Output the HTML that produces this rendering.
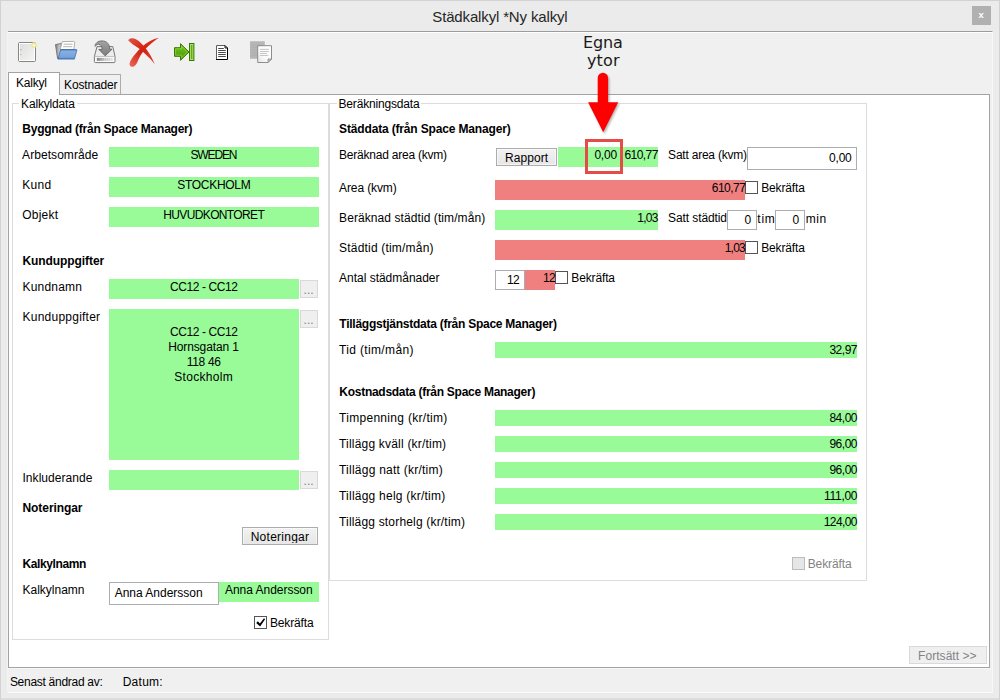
<!DOCTYPE html>
<html lang="sv">
<head>
<meta charset="utf-8">
<title>Städkalkyl *Ny kalkyl</title>
<style>
html,body{margin:0;padding:0;}
body{width:1000px;height:700px;position:relative;overflow:hidden;background:#ebebeb;font-family:"Liberation Sans",sans-serif;font-size:12px;color:#000;}
.a{position:absolute;box-sizing:border-box;}
.t{position:absolute;white-space:pre;}
.g{position:absolute;background:#98fb98;}
.r{position:absolute;background:#f08080;}
.inp{position:absolute;box-sizing:border-box;background:#fff;border:1px solid #abadb3;}
.cb{position:absolute;box-sizing:border-box;width:13px;height:13px;background:#fff;border:1px solid #555;}
.btn{position:absolute;box-sizing:border-box;border:1px solid #acacac;background:linear-gradient(#f2f2f2,#e6e6e6);}
.dbtn{position:absolute;box-sizing:border-box;border:1px solid #d9d9d9;background:#efefef;}
.gb{position:absolute;box-sizing:border-box;border:1px solid #dcdcdc;}
</style>
</head>
<body>
<!-- window frame -->
<div class="a" style="left:0;top:0;width:1000px;height:700px;border:1px solid #d2d2d2;border-bottom:2px solid #dcdcdc;"></div>
<!-- close button -->
<div class="a" style="left:972px;top:6px;width:19px;height:19px;background:#b0b0b0;"></div>

<!-- inner panel -->
<div class="a" style="left:8px;top:31px;width:985px;height:662px;background:#f0f0f0;border-top:1px solid #9c9c9c;border-right:1px solid #f7f7f7;border-bottom:1px solid #fafafa;"></div>
<div class="a" style="left:7px;top:31px;width:1px;height:662px;background:#f3f3f3;"></div>
<div class="a" style="left:8px;top:32px;width:984px;height:1px;background:#fff;"></div>

<!--ICONS_START-->
<!-- toolbar icons -->
<svg class="a" style="left:17px;top:41px" width="22" height="23" viewBox="0 0 22 23">
  <defs>
    <linearGradient id="nd" x1="0" y1="0" x2="1" y2="1"><stop offset="0" stop-color="#dcdcdc"/><stop offset="1" stop-color="#f6f6f6"/></linearGradient>
    <radialGradient id="glow"><stop offset="0" stop-color="#f6f4ff"/><stop offset="0.38" stop-color="#f5f3dc"/><stop offset="0.66" stop-color="#ebe36e" stop-opacity="0.95"/><stop offset="0.88" stop-color="#efe99a" stop-opacity="0.5"/><stop offset="1" stop-color="#efe99a" stop-opacity="0"/></radialGradient>
  </defs>
  <rect x="1.5" y="1.5" width="17" height="19" rx="1.2" fill="url(#nd)" stroke="#85857e"/>
  <rect x="2.5" y="2.5" width="15" height="17" fill="none" stroke="#fff"/>
  <circle cx="3.8" cy="8.7" r="0.7" fill="#a8a8a8"/><circle cx="3.8" cy="13.6" r="0.7" fill="#a8a8a8"/>
  <circle cx="17" cy="4.1" r="3.3" fill="url(#glow)"/>
</svg>
<svg class="a" style="left:54px;top:40px" width="25" height="22" viewBox="0 0 25 22">
  <defs>
    <linearGradient id="fb" x1="0" y1="0" x2="0" y2="1"><stop offset="0" stop-color="#4a7dc2"/><stop offset="0.2" stop-color="#86aee0"/><stop offset="0.8" stop-color="#78a3da"/><stop offset="1" stop-color="#4477be"/></linearGradient>
    <linearGradient id="fg" x1="0" y1="0" x2="1" y2="0"><stop offset="0" stop-color="#7c7c7c"/><stop offset="0.5" stop-color="#c8c8c8"/><stop offset="1" stop-color="#8e8e8e"/></linearGradient>
  </defs>
  <path d="M1.5 4.6 L7.5 3.4 L9 17.5 L3.6 18.6 Z" fill="url(#fg)" stroke="#707070" stroke-width="0.9"/>
  <path d="M8.2 1.6 L19.6 1.4 Q20.8 1.5 20.7 2.8 L19.8 9.5 L6.2 9.5 Z" fill="#fff" stroke="#a6a6a0" stroke-width="0.9"/>
  <path d="M9.6 4.2 H18.6 M9 6.7 H18.2" stroke="#b4b4b0" stroke-width="1"/>
  <path d="M6.7 9.5 L22.2 9.5 Q23 9.5 22.8 10.4 L20.4 19.1 L4 19.1 Z" fill="url(#fb)" stroke="#3d6fb4" stroke-width="0.8"/>
</svg>
<svg class="a" style="left:93px;top:40px" width="25" height="24" viewBox="0 0 25 24">
  <defs>
    <linearGradient id="dv" x1="0" y1="0" x2="0" y2="1"><stop offset="0" stop-color="#e4e4e4"/><stop offset="1" stop-color="#fafafa"/></linearGradient>
    <linearGradient id="sl" x1="0" y1="0" x2="1" y2="0"><stop offset="0" stop-color="#7e7e7e"/><stop offset="0.35" stop-color="#b2b2b2"/><stop offset="1" stop-color="#e2e2e2"/></linearGradient>
    <linearGradient id="ar" x1="0" y1="0" x2="0" y2="1"><stop offset="0" stop-color="#a4a4a4"/><stop offset="1" stop-color="#7c7c7c"/></linearGradient>
  </defs>
  <path d="M4 6.6 H19.8 L22 16.4 V21.6 Q22 22.6 21 22.6 H2.4 Q1.4 22.6 1.4 21.6 V16.4 Z" fill="url(#dv)" stroke="#787878" stroke-width="1"/>
  <path d="M1.6 16.4 H21.8" stroke="#b0b0b0" stroke-width="0.8"/>
  <rect x="2.6" y="17.3" width="18.2" height="4.1" fill="#ededed" stroke="#fff" stroke-width="0.6"/>
  <rect x="4" y="17.9" width="15.2" height="2.9" fill="url(#sl)"/>
  <path d="M2.1 6.4 C2 3.4 4.6 0.9 9 0.9 C13.8 0.9 16.6 4 16.7 9.2 L19 9.2 L12.25 15.9 L5.9 9.5 L9.1 9.5 C9.1 6.6 8 4.4 5.6 4.3 C4.2 4.3 3 5.2 2.1 6.4 Z" fill="url(#ar)" stroke="#606060" stroke-width="0.8" stroke-linejoin="round"/>
  <path d="M11.5 18 V20.8 M13.5 18 V20.8 M15.5 18 V20.8 M17.5 18 V20.8" stroke="#f4f4f4" stroke-width="0.5" opacity="0.8"/>
</svg>
<svg class="a" style="left:126px;top:35px" width="36" height="34" viewBox="0 0 36 34">
  <defs>
    <linearGradient id="rx" x1="0" y1="0" x2="1" y2="1"><stop offset="0" stop-color="#e25544"/><stop offset="0.5" stop-color="#d3210f"/><stop offset="1" stop-color="#e04a38"/></linearGradient>
    <linearGradient id="rx2" x1="1" y1="0" x2="0" y2="1"><stop offset="0" stop-color="#d8301e"/><stop offset="0.55" stop-color="#d3210f"/><stop offset="1" stop-color="#ea6a58"/></linearGradient>
  </defs>
  <path d="M2.2 5.2 C5 1.6 10.6 3.8 14.4 7.4 C20.4 13 25.6 21.2 28.8 29.2 C23.4 22.6 17.2 16.6 12 12.8 C8.4 10.2 4.6 8 2.2 5.2 Z" fill="url(#rx)"/>
  <path d="M33 2.8 C25 4.6 18.4 9 13.6 14.2 C8.8 19.2 4.8 24.2 3.7 28 C2.9 30.8 5.2 32.6 7.8 31.4 C10.6 30 11.4 27 12.8 23.8 C15 18.8 18.6 14.6 22.4 11 C26.2 7.4 30 4.8 33 2.8 Z" fill="url(#rx2)"/>
</svg>
<svg class="a" style="left:173px;top:42px" width="23" height="20" viewBox="0 0 23 20">
  <defs>
    <linearGradient id="ga" x1="0" y1="0" x2="0" y2="1"><stop offset="0" stop-color="#7fcb26"/><stop offset="0.5" stop-color="#5cad10"/><stop offset="1" stop-color="#4c990a"/></linearGradient>
  </defs>
  <path d="M1.5 5.7 H7.5 V1.7 L16 10 L7.5 18.3 V14.3 H1.5 Z" fill="url(#ga)" stroke="#3c7606" stroke-width="1" stroke-linejoin="round"/>
  <path d="M2.6 6.8 H8.6 V4.2 L14.4 10 L8.6 15.8 V13.2 H2.6 Z" fill="none" stroke="#9bdc4c" stroke-width="0.8" opacity="0.75"/>
  <rect x="16.5" y="1.5" width="4.4" height="17" fill="#a4e25a" stroke="#3c7606" stroke-width="1"/>
  <rect x="18.1" y="3.1" width="1.2" height="13.8" fill="#58a80e"/>
</svg>
<svg class="a" style="left:215px;top:44px" width="15" height="18" viewBox="0 0 15 18">
  <path d="M1.5 1.5 H10 L12.5 4 V15.5 H1.5 Z" fill="#fff"/>
  <path d="M1.5 15.5 V1.5 H10" fill="none" stroke="#5e5e5e" stroke-width="1"/>
  <path d="M10 1.5 L12.5 4 V15.5 H1" fill="none" stroke="#000" stroke-width="1"/>
  <path d="M10 1.5 V4 H12.5" fill="none" stroke="#000" stroke-width="0.9"/>
  <path d="M3.2 4.5 H8.8 M3.2 6.5 H10.8 M3.2 8.5 H10.8 M3.2 10.5 H10.8 M3.2 12.5 H10.8" stroke="#4a4a4a" stroke-width="1"/>
</svg>
<svg class="a" style="left:249px;top:40px" width="25" height="25" viewBox="0 0 25 25">
  <defs><linearGradient id="cp" x1="1" y1="0" x2="0" y2="1"><stop offset="0" stop-color="#fff"/><stop offset="0.6" stop-color="#fafafa"/><stop offset="1" stop-color="#e2e2e2"/></linearGradient></defs>
  <rect x="1" y="1.2" width="14.8" height="17.6" rx="0.6" fill="#b6b6b6"/>
  <path d="M3 5 H13 M3 7.5 H13 M3 10 H13 M3 12.5 H13 M3 15 H13" stroke="#adadad" stroke-width="0.8"/>
  <path d="M8.7 5.7 H22.5 V19 L19 22.5 H8.7 Z" fill="url(#cp)" stroke="#8c8c8c" stroke-width="1" stroke-linejoin="round"/>
  <path d="M22.5 19 H19 V22.5 Z" fill="#c4c4c4" stroke="#8c8c8c" stroke-width="0.8" stroke-linejoin="round"/>
  <path d="M11 9.4 H20 M11 11.5 H20 M11 13.5 H18 M11 15.5 H19.4" stroke="#c6c6c6" stroke-width="1"/>
</svg>
<!--ICONS_END-->

<!-- tab page -->
<div class="a" style="left:8px;top:94px;width:982px;height:574px;background:#fff;border:1px solid #a3a3a3;"></div>
<div class="a" style="left:8px;top:668px;width:983px;height:1px;background:#f7f7f7;"></div>
<!-- tabs -->
<div class="a" style="left:57px;top:74px;width:64px;height:21px;background:#f0f0f0;border:1px solid #acacac;border-bottom:1px solid #a3a3a3;"></div>
<div class="a" style="left:8px;top:72px;width:52px;height:23px;background:#fff;border:1px solid #a3a3a3;border-bottom:none;"></div>

<!-- group boxes -->
<div class="gb" style="left:12px;top:103px;width:317px;height:537px;"></div>
<div class="gb" style="left:329px;top:103px;width:538px;height:478px;"></div>

<!-- LEFT: green fields -->
<div class="g" style="left:109px;top:147px;width:210px;height:20px;"></div>
<div class="g" style="left:109px;top:177px;width:210px;height:20px;"></div>
<div class="g" style="left:109px;top:207px;width:210px;height:20px;"></div>
<div class="g" style="left:109px;top:279px;width:190px;height:20px;"></div>
<div class="g" style="left:109px;top:309px;width:190px;height:151px;"></div>
<div class="g" style="left:109px;top:470px;width:190px;height:20px;"></div>
<div class="dbtn" style="left:300px;top:280px;width:18px;height:18px;"></div>
<div class="dbtn" style="left:300px;top:310px;width:18px;height:18px;"></div>
<div class="dbtn" style="left:300px;top:471px;width:18px;height:18px;"></div>
<div class="btn" style="left:242px;top:527px;width:76px;height:18px;box-shadow:inset 0 0 0 1px rgba(255,255,255,0.55);"></div>
<div class="inp" style="left:109px;top:582px;width:110px;height:23px;"></div>
<div class="g" style="left:219px;top:582px;width:100px;height:20px;"></div>
<div class="cb" style="left:254px;top:616px;"></div>
<svg class="a" style="left:254px;top:616px" width="13" height="13" viewBox="0 0 13 13"><path d="M2.2 6.9 L3.9 5.2 L5.9 7.5 L10.0 2.3 L11.1 3.2 L6.1 10.5 Z" fill="#000"/></svg>

<!-- RIGHT -->
<div class="btn" style="left:496px;top:148px;width:61px;height:18px;box-shadow:inset 0 0 0 1px rgba(255,255,255,0.55);"></div>
<div class="g" style="left:558px;top:147px;width:100px;height:20px;"></div>
<div class="inp" style="left:747px;top:147px;width:110px;height:23px;"></div>
<div class="r" style="left:495px;top:180px;width:250px;height:20px;"></div>
<div class="cb" style="left:745px;top:181px;"></div>
<div class="g" style="left:495px;top:210px;width:163px;height:20px;"></div>
<div class="inp" style="left:727px;top:210px;width:30px;height:20px;"></div>
<div class="inp" style="left:775px;top:210px;width:30px;height:20px;"></div>
<div class="r" style="left:495px;top:240px;width:250px;height:20px;"></div>
<div class="cb" style="left:745px;top:241px;"></div>
<div class="inp" style="left:495px;top:270px;width:30px;height:20px;"></div>
<div class="r" style="left:525px;top:270px;width:30px;height:20px;"></div>
<div class="cb" style="left:555px;top:271px;"></div>
<div class="g" style="left:495px;top:342px;width:362px;height:16px;"></div>
<div class="g" style="left:495px;top:410px;width:362px;height:16px;"></div>
<div class="g" style="left:495px;top:436px;width:362px;height:16px;"></div>
<div class="g" style="left:495px;top:462px;width:362px;height:16px;"></div>
<div class="g" style="left:495px;top:488px;width:362px;height:16px;"></div>
<div class="g" style="left:495px;top:514px;width:362px;height:16px;"></div>
<div class="a" style="left:792px;top:557px;width:13px;height:13px;background:#e6e6e6;border:1px solid #bcbcbc;"></div>
<div class="dbtn" style="left:909px;top:646px;width:78px;height:18px;"></div>

<!-- dots on disabled buttons -->
<span class="t" style="left:303.6px;top:283px;color:#838383;line-height:14px;letter-spacing:0.05px">...</span>
<span class="t" style="left:303.6px;top:313px;color:#838383;line-height:14px;letter-spacing:0.05px">...</span>
<span class="t" style="left:303.6px;top:474px;color:#838383;line-height:14px;letter-spacing:0.05px">...</span>

<span class="t" style="left:432.3px;top:8px;font-size:15px;line-height:17px;letter-spacing:-0.15px;color:#262626">Städkalkyl *Ny kalkyl</span>
<span class="t" style="left:978.5px;top:9px;font-size:9.5px;line-height:11px;font-weight:bold;color:#fff">x</span>
<span class="t" style="left:16.1px;top:76px;font-size:12px;line-height:14px;letter-spacing:-0.24px;">Kalkyl</span>
<span class="t" style="left:64.1px;top:78px;font-size:12px;line-height:14px;letter-spacing:-0.16px;">Kostnader</span>
<span class="t" style="left:21.1px;top:97px;font-size:12px;line-height:14px;letter-spacing:-0.18px;background:#fff;padding:0 2px;margin-left:-2px">Kalkyldata</span>
<span class="t" style="left:22.3px;top:122px;font-size:12px;line-height:14px;letter-spacing:-0.24px;font-weight:bold;">Byggnad (från Space Manager)</span>
<span class="t" style="left:22.1px;top:148px;font-size:12px;line-height:14px;letter-spacing:0.06px;">Arbetsområde</span>
<span class="t" style="left:22.3px;top:178px;font-size:12px;line-height:14px;letter-spacing:0.29px;">Kund</span>
<span class="t" style="left:22.3px;top:208px;font-size:12px;line-height:14px;letter-spacing:0.20px;">Objekt</span>
<span class="t" style="left:190.5px;top:148px;font-size:12px;line-height:14px;letter-spacing:-1.13px;">SWEDEN</span>
<span class="t" style="left:177.3px;top:178px;font-size:12px;line-height:14px;letter-spacing:-0.30px;">STOCKHOLM</span>
<span class="t" style="left:163.3px;top:208px;font-size:12px;line-height:14px;letter-spacing:-0.64px;">HUVUDKONTORET</span>
<span class="t" style="left:22.5px;top:254px;font-size:12px;line-height:14px;letter-spacing:-0.08px;font-weight:bold;">Kunduppgifter</span>
<span class="t" style="left:22.5px;top:280px;font-size:12px;line-height:14px;letter-spacing:0.19px;">Kundnamn</span>
<span class="t" style="left:170.1px;top:280px;font-size:12px;line-height:14px;letter-spacing:-0.42px;">CC12 - CC12</span>
<span class="t" style="left:22.5px;top:310px;font-size:12px;line-height:14px;letter-spacing:0.24px;">Kunduppgifter</span>
<span class="t" style="left:170.1px;top:325px;font-size:12px;line-height:14px;letter-spacing:-0.42px;">CC12 - CC12</span>
<span class="t" style="left:168.2px;top:340px;font-size:12px;line-height:14px;letter-spacing:-0.12px;">Hornsgatan 1</span>
<span class="t" style="left:186.8px;top:355px;font-size:12px;line-height:14px;letter-spacing:-0.34px;">118 46</span>
<span class="t" style="left:174.3px;top:370px;font-size:12px;line-height:14px;letter-spacing:0.31px;">Stockholm</span>
<span class="t" style="left:22.5px;top:471px;font-size:12px;line-height:14px;letter-spacing:0.04px;">Inkluderande</span>
<span class="t" style="left:22.5px;top:501px;font-size:12px;line-height:14px;letter-spacing:-0.07px;font-weight:bold;">Noteringar</span>
<span class="t" style="left:250.7px;top:530px;font-size:12px;line-height:14px;letter-spacing:0.26px;">Noteringar</span>
<span class="t" style="left:22.5px;top:557px;font-size:12px;line-height:14px;letter-spacing:-0.40px;font-weight:bold;">Kalkylnamn</span>
<span class="t" style="left:22.5px;top:583px;font-size:12px;line-height:14px;">Kalkylnamn</span>
<span class="t" style="left:114.7px;top:586px;font-size:12px;line-height:14px;letter-spacing:-0.01px;">Anna Andersson</span>
<span class="t" style="left:225.0px;top:583px;font-size:12px;line-height:14px;letter-spacing:-0.03px;">Anna Andersson</span>
<span class="t" style="left:269.9px;top:616px;font-size:12px;line-height:14px;letter-spacing:-0.14px;">Bekräfta</span>
<span class="t" style="left:9.9px;top:675px;font-size:12px;line-height:14px;letter-spacing:-0.28px;">Senast ändrad av:</span>
<span class="t" style="left:122.7px;top:675px;font-size:12px;line-height:14px;letter-spacing:0.26px;">Datum:</span>
<span class="t" style="left:338.5px;top:97px;font-size:12px;line-height:14px;letter-spacing:-0.18px;background:#fff;padding:0 2px;margin-left:-2px">Beräkningsdata</span>
<span class="t" style="left:339.1px;top:122px;font-size:12px;line-height:14px;letter-spacing:-0.16px;font-weight:bold;">Städdata (från Space Manager)</span>
<span class="t" style="left:339.1px;top:148px;font-size:12px;line-height:14px;letter-spacing:-0.23px;">Beräknad area (kvm)</span>
<span class="t" style="left:505.0px;top:151px;font-size:12px;line-height:14px;letter-spacing:0.07px;">Rapport</span>
<span class="t" style="left:594.4px;top:148px;font-size:12px;line-height:14px;letter-spacing:-0.19px;">0,00</span>
<span class="t" style="left:624.4px;top:148px;font-size:12px;line-height:14px;letter-spacing:-0.54px;">610,77</span>
<span class="t" style="left:668.1px;top:148px;font-size:12px;line-height:14px;letter-spacing:-0.22px;">Satt area (kvm)</span>
<span class="t" style="left:829.0px;top:151px;font-size:12px;line-height:14px;letter-spacing:-0.19px;">0,00</span>
<span class="t" style="left:339.1px;top:181px;font-size:12px;line-height:14px;letter-spacing:-0.12px;">Area (kvm)</span>
<span class="t" style="left:711.8px;top:181px;font-size:12px;line-height:14px;letter-spacing:-0.54px;">610,77</span>
<span class="t" style="left:761.2px;top:181px;font-size:12px;line-height:14px;letter-spacing:-0.14px;">Bekräfta</span>
<span class="t" style="left:339.1px;top:211px;font-size:12px;line-height:14px;letter-spacing:0.08px;">Beräknad städtid (tim/mån)</span>
<span class="t" style="left:637.3px;top:211px;font-size:12px;line-height:14px;letter-spacing:-0.75px;">1,03</span>
<span class="t" style="left:668.1px;top:211px;font-size:12px;line-height:14px;letter-spacing:-0.10px;">Satt städtid</span>
<span class="t" style="left:744.6px;top:213px;font-size:12px;line-height:14px;">0</span>
<span class="t" style="left:757.3px;top:212px;font-size:12px;line-height:14px;letter-spacing:0.75px;">tim</span>
<span class="t" style="left:792.6px;top:213px;font-size:12px;line-height:14px;">0</span>
<span class="t" style="left:805.7px;top:212px;font-size:12px;line-height:14px;letter-spacing:0.53px;">min</span>
<span class="t" style="left:339.1px;top:241px;font-size:12px;line-height:14px;letter-spacing:0.19px;">Städtid (tim/mån)</span>
<span class="t" style="left:724.7px;top:241px;font-size:12px;line-height:14px;letter-spacing:-0.75px;">1,03</span>
<span class="t" style="left:761.2px;top:241px;font-size:12px;line-height:14px;letter-spacing:-0.14px;">Bekräfta</span>
<span class="t" style="left:339.1px;top:271px;font-size:12px;line-height:14px;letter-spacing:-0.02px;">Antal städmånader</span>
<span class="t" style="left:507.0px;top:273px;font-size:12px;line-height:14px;letter-spacing:-0.56px;">12</span>
<span class="t" style="left:543.0px;top:271px;font-size:12px;line-height:14px;letter-spacing:-0.56px;">12</span>
<span class="t" style="left:571.3px;top:271px;font-size:12px;line-height:14px;letter-spacing:-0.14px;">Bekräfta</span>
<span class="t" style="left:339.3px;top:317px;font-size:12px;line-height:14px;letter-spacing:-0.25px;font-weight:bold;">Tilläggstjänstdata (från Space Manager)</span>
<span class="t" style="left:339.0px;top:343px;font-size:12px;line-height:14px;letter-spacing:0.35px;">Tid (tim/mån)</span>
<span class="t" style="left:829.4px;top:343px;font-size:12px;line-height:14px;letter-spacing:-0.48px;">32,97</span>
<span class="t" style="left:339.3px;top:385px;font-size:12px;line-height:14px;letter-spacing:-0.27px;font-weight:bold;">Kostnadsdata (från Space Manager)</span>
<span class="t" style="left:339.0px;top:411px;font-size:12px;line-height:14px;letter-spacing:0.30px;">Timpenning (kr/tim)</span>
<span class="t" style="left:829.4px;top:411px;font-size:12px;line-height:14px;letter-spacing:-0.48px;">84,00</span>
<span class="t" style="left:339.0px;top:437px;font-size:12px;line-height:14px;letter-spacing:0.20px;">Tillägg kväll (kr/tim)</span>
<span class="t" style="left:829.4px;top:437px;font-size:12px;line-height:14px;letter-spacing:-0.48px;">96,00</span>
<span class="t" style="left:339.0px;top:463px;font-size:12px;line-height:14px;letter-spacing:0.24px;">Tillägg natt (kr/tim)</span>
<span class="t" style="left:829.4px;top:463px;font-size:12px;line-height:14px;letter-spacing:-0.48px;">96,00</span>
<span class="t" style="left:339.0px;top:489px;font-size:12px;line-height:14px;letter-spacing:0.23px;">Tillägg helg (kr/tim)</span>
<span class="t" style="left:824.1px;top:489px;font-size:12px;line-height:14px;letter-spacing:-0.30px;">111,00</span>
<span class="t" style="left:339.0px;top:515px;font-size:12px;line-height:14px;letter-spacing:0.18px;">Tillägg storhelg (kr/tim)</span>
<span class="t" style="left:823.8px;top:515px;font-size:12px;line-height:14px;letter-spacing:-0.60px;">124,00</span>
<span class="t" style="left:807.7px;top:557px;font-size:12px;line-height:14px;letter-spacing:-0.09px;color:#838383">Bekräfta</span>
<span class="t" style="left:918.1px;top:649px;font-size:12px;line-height:14px;letter-spacing:0.04px;color:#838383">Fortsätt &gt;&gt;</span>
<span class="t" style="left:583.0px;top:33px;font-size:16px;line-height:19px;letter-spacing:-0.11px;font-family:'DejaVu Sans',sans-serif;color:#1a1a1a">Egna</span>
<span class="t" style="left:586.9px;top:51px;font-size:16px;line-height:19px;letter-spacing:0.16px;font-family:'DejaVu Sans',sans-serif;color:#1a1a1a">ytor</span>

<div class="a" style="left:244px;top:543px;width:72px;height:1px;background:#e8e8e8;"></div>
<!-- annotation: red box + arrow -->
<div class="a" style="left:585px;top:139px;width:38px;height:35px;border:3px solid #e64c46;"></div>
<svg class="a" style="left:580px;top:68px" width="48" height="72" viewBox="0 0 48 72">
  <defs><filter id="sh" x="-20%" y="-10%" width="150%" height="130%"><feGaussianBlur stdDeviation="1.1"/></filter></defs>
  <path d="M17.7 10 a5.2 5.2 0 0 1 10.4 0 L28.1 34.2 L38.2 34.2 L23.2 64.3 L8.1 34.2 L17.7 34.2 Z" fill="#555" opacity="0.45" transform="translate(1.3,1.6)" filter="url(#sh)"/>
  <path d="M17.7 10 a5.2 5.2 0 0 1 10.4 0 L28.1 34.2 L38.2 34.2 L23.2 64.3 L8.1 34.2 L17.7 34.2 Z" fill="#ff0000"/>
</svg>
</body>
</html>
